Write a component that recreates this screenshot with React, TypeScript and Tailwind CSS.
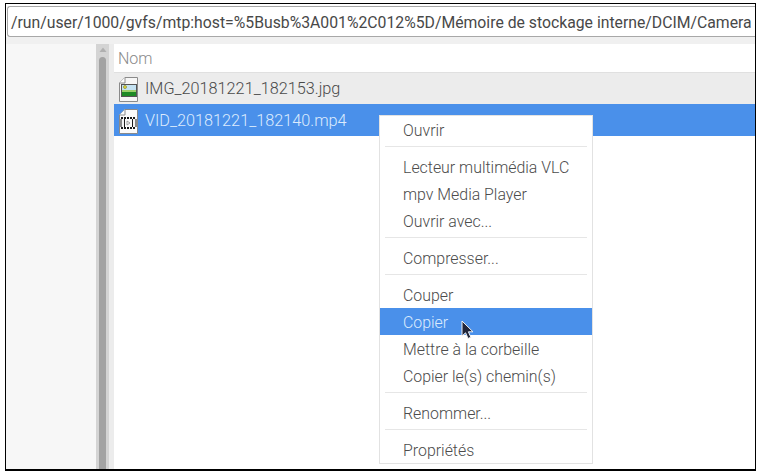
const font = { fontFamily: "Roboto, 'Liberation Sans', sans-serif" };

function ImageIcon() {
  return (
    <svg width="19" height="25" viewBox="0 0 19 25" className="shrink-0">
      <path d="M6 .5H18.5V24.5H.5V6Z" fill="#f6f6f6" stroke="#8a8a8a" />
      <path d="M6 .5V6H.5" fill="#fff" stroke="#8a8a8a" />
      <rect x="3" y="8" width="14" height="5" fill="#c4e2f2" />
      <rect x="3" y="13" width="14" height="2" fill="#9ccf6a" />
      <rect x="3" y="15" width="14" height="4" fill="#1e8a25" />
      <rect x="2.5" y="7.5" width="15" height="12" fill="none" stroke="#555" />
      <circle cx="6" cy="10" r="1.5" fill="#e8e03a" stroke="#77741a" strokeWidth=".6" />
    </svg>
  );
}

function VideoIcon() {
  return (
    <svg width="19" height="25" viewBox="0 0 19 25" className="shrink-0">
      <path d="M6 .5H18.5V24.5H.5V6Z" fill="#fafafa" stroke="#8a8a8a" />
      <path d="M6 .5V6H.5" fill="#fff" stroke="#8a8a8a" />
      <path d="M2 9h15M2 19h15" stroke="#1b1b1b" strokeWidth="2" strokeDasharray="2 1" />
      <path d="M3.5 10v8M15.5 10v8" stroke="#f4f4f4" strokeWidth="3" />
      <path d="M5.5 10v8M13.5 10v8M2 10v8M17 10v8" stroke="#1b1b1b" strokeWidth="1" />
      <path d="M8 12v4l3-2Z" fill="none" stroke="#888" strokeWidth=".8" />
    </svg>
  );
}

function Cursor() {
  return (
    <svg width="15" height="21" viewBox="0 0 15 21" className="absolute left-[81px] top-[12px]">
      <path d="M1 1V16L4.6 12.8L7 18.5L9.8 17.2L7.4 11.8H12Z" fill="#20253a" stroke="#f2f2f2" strokeWidth="1" />
    </svg>
  );
}

function Item({ label, active, cursor }: { label: string; active?: boolean; cursor?: boolean }) {
  return (
    <div className={`relative flex h-[27px] items-center pl-[23px] pt-[2px] ${active ? "bg-[#4a90ea] text-[#dcebfd]" : "text-[#4c4c4c]"}`}>
      {label}
      {cursor && <Cursor />}
    </div>
  );
}

function Sep() {
  return (
    <div className="h-[10px] px-[5px] pt-[3px]">
      <div className="h-px bg-[#e6e6e6]" />
    </div>
  );
}

export default function App() {
  return (
    <div className="h-[474px] w-[761px] overflow-hidden bg-white pl-[5px] pr-[5px] pt-[3px] pb-[3px]" style={font}>
      <div className="relative flex h-[468px] flex-col border-l-[1px] border-r-[1px] border-t-[1px] border-b-[2px] border-black bg-white pt-[2px]">
        <div className="ml-[1px] flex h-[31px] shrink-0 items-center overflow-hidden whitespace-nowrap rounded-l-[3px] border-y border-l border-[#a8a8a8] bg-white pl-[3px] pt-[2px] text-[15.78px] text-[#484848]">
          /run/user/1000/gvfs/mtp:host=%5Busb%3A001%2C012%5D/Mémoire de stockage interne/DCIM/Camera
        </div>
        <div className="flex min-h-0 flex-1 flex-col bg-[#f7f7f7]">
          <div className="h-[7px] shrink-0 bg-[#f0f0f0]" />
          <div className="flex min-h-0 flex-1">
            <div className="w-[90px] shrink-0 bg-[#f7f7f7]" />
            <div className="w-[18px] shrink-0 bg-[#ececec] pr-[5px]">
              <div className="flex h-full flex-col items-center bg-[#d4d4d4]">
                <svg width="10" height="8" viewBox="0 0 10 8" className="mt-[2px] shrink-0">
                  <path d="M5 1.5 8.5 6h-7Z" fill="#b0b0b0" />
                </svg>
                <div className="mt-[3px] w-[7px] flex-1 rounded-t-[4px] bg-[#a3a3a3]" />
              </div>
            </div>
            <div className="min-w-0 flex-1 bg-white">
              <div className="flex h-[29px] items-center border-b border-[#e0e0e0] bg-white pl-[4px] pt-[1px] text-[16px] font-light text-[#8a8a8a]">
                Nom
              </div>
              <div className="flex h-[31px] items-center gap-[7px] bg-[#ececec] pl-[5px] pt-[2px] text-[16.25px] font-light text-[#4a4a4a]">
                <ImageIcon />
                IMG_20181221_182153.jpg
              </div>
              <div className="flex h-[32px] items-center gap-[7px] bg-[#4a90ea] pl-[5px] pt-[2px] text-[16.25px] font-light text-[#dcebfd]">
                <VideoIcon />
                VID_20181221_182140.mp4
              </div>
            </div>
          </div>
        </div>

        <div className="absolute left-[373px] top-[111px] w-[214px] border border-[#e2e2e2] bg-white text-[15.9px] font-light">
          <Item label="Ouvrir" />
          <Sep />
          <Item label="Lecteur multimédia VLC" />
          <Item label="mpv Media Player" />
          <Item label="Ouvrir avec..." />
          <Sep />
          <Item label="Compresser..." />
          <Sep />
          <Item label="Couper" />
          <Item label="Copier" active cursor />
          <Item label="Mettre à la corbeille" />
          <Item label="Copier le(s) chemin(s)" />
          <Sep />
          <Item label="Renommer..." />
          <Sep />
          <Item label="Propriétés" />
        </div>
      </div>
    </div>
  );
}
